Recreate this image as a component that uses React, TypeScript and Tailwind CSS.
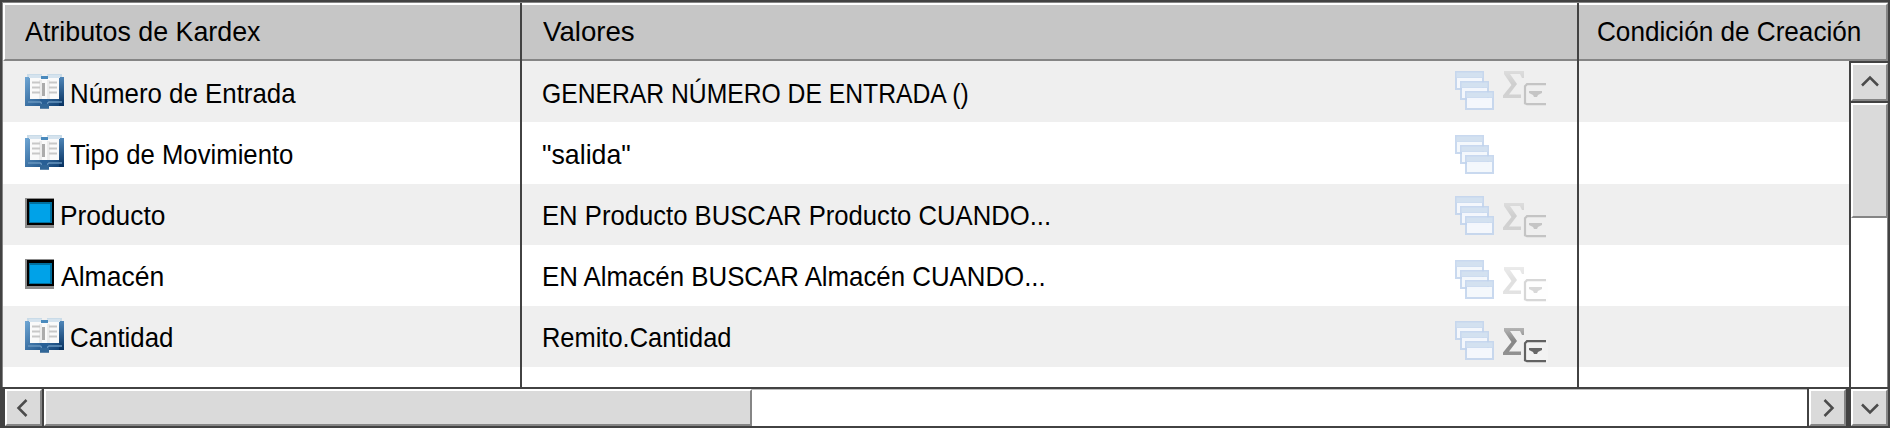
import type { ReactNode } from 'react';

function BookIcon() {
  return (
    <svg width="39" height="35" viewBox="0 0 39 35" className="block shrink-0">
      <defs>
        <linearGradient id="cover" x1="0" y1="0" x2="1" y2="1">
          <stop offset="0" stopColor="#6fa6d4" />
          <stop offset="0.55" stopColor="#34699c" />
          <stop offset="1" stopColor="#0a386b" />
        </linearGradient>
        <linearGradient id="edge" x1="0" y1="0" x2="0" y2="1">
          <stop offset="0" stopColor="#4f86b8" />
          <stop offset="1" stopColor="#06305f" />
        </linearGradient>
      </defs>
      <path d="M2 0h15v3h5v-3h15v4H2z" fill="#c9dbe8" />
      <path d="M0 3h39v29H24v2.500H15V32H0z" fill="url(#cover)" />
      <path d="M34 3h5v29h-5z" fill="url(#edge)" />
      <path d="M4 1h13v3h5V1h13v3H4z" fill="#d5e3ee" />
      <path d="M5 4h29v21H5z" fill="#fafafa" />
      <path d="M16 2h7v3h-7z" fill="#4a8abd" />
      <path d="M14 6h3v19h-3zM22 6h3v19h-3z" fill="#ececec" />
      <path d="M17 9h3v13h-3z" fill="#ababab" />
      <path d="M7 8.500h8M7 13.500h8M7 18.500h8M24 8.500h8M24 13.500h8M24 18.500h8" stroke="#c8c8c8" strokeWidth="2" />
      <path d="M3 28h12l2 1.500h5l2-1.500h13" fill="none" stroke="#6795bf" strokeWidth="1.500" />
      <path d="M15 25h9v2h-2v3h-5v-3h-2z" fill="#285f95" />
      <path d="M15 30h9v4.500h-9z" fill="#316697" />
    </svg>
  );
}

function SquareIcon() {
  return (
    <svg width="29" height="30" viewBox="0 0 29 30" className="block shrink-0">
      <path d="M0 0h29v30H0z" fill="#8b8b8b" />
      <path d="M2 1h27v26H2z" fill="#000" />
      <path d="M4 4h23v21H4z" fill="#00709f" />
      <path d="M5 6h20v18H5z" fill="#00a2e8" />
    </svg>
  );
}

function WindowsIcon() {
  return (
    <svg width="39" height="39" viewBox="0 0 39 39" className="block shrink-0">
      {[0, 1, 2].map((i) => (
        <g key={i} transform={`translate(${i * 5} ${i * 10})`}>
          <path d="M0 0h29v19H0z" fill="#bfd2ec" fillOpacity="0.85" />
          <path d="M1.500 1.500h26v5h-26z" fill="#d3e1f0" />
          <path d="M2 7h25v10H2z" fill="#fff" fillOpacity="0.8" />
        </g>
      ))}
    </svg>
  );
}

function SumMenuIcon() {
  return (
    <svg width="45" height="35" viewBox="0 0 45 35" className="block shrink-0">
      <defs>
        <linearGradient id="sum" x1="0" y1="0" x2="0" y2="1">
          <stop offset="0" stopColor="#b4b4b4" />
          <stop offset="0.5" stopColor="#858585" />
          <stop offset="1" stopColor="#929292" />
        </linearGradient>
      </defs>
      <path d="M1 0h20v7h-2l-2-4H7l7 10-8 10.500h12V27H0v-2.500L8.500 14 1 3z" fill="url(#sum)" />
      <path d="M20 12h25v23H20z" fill="#f8f8f8" fillOpacity="0.4" />
      <path d="M43 13.200H24l-2 2v17l2 1H43" fill="none" stroke="#626262" strokeWidth="2.200" />
      <path d="M26 20h13v2l-4 2-1 2h-3l-1-2-4-2z" fill="#686868" />
    </svg>
  );
}

type IconKind = 'book' | 'square';

interface Row {
  icon: IconKind;
  iconPad: string;
  name: string;
  namePad: string;
  nameScale: string;
  value: string;
  valuePad: string;
  valueScale: string;
  height: string;
  tone: string;
  windowsPad: string;
  sum?: string;
}

const rows: Row[] = [
  { icon: 'book', iconPad: 'pt-[13px]', name: 'Número de Entrada', namePad: 'pt-1 pl-1.5', nameScale: 'scale-x-[0.94]', value: 'GENERAR NÚMERO DE ENTRADA ()', valuePad: 'pt-[17px]', valueScale: 'scale-x-[0.898]', height: 'h-[61px]', tone: 'bg-[#efefef]', windowsPad: 'pt-[10px]', sum: 'pt-[10px] opacity-30' },
  { icon: 'book', iconPad: 'pt-[13px]', name: 'Tipo de Movimiento', namePad: 'pt-1 pl-1.5', nameScale: 'scale-x-[0.935]', value: '"salida"', valuePad: 'pt-[17px]', valueScale: 'scale-x-[0.972]', height: 'h-[62px]', tone: 'bg-white', windowsPad: 'pt-[13px]' },
  { icon: 'square', iconPad: 'pt-[14px]', name: 'Producto', namePad: 'pt-0.5 pl-1.5', nameScale: 'scale-x-[0.957]', value: 'EN Producto BUSCAR Producto CUANDO...', valuePad: 'pt-4', valueScale: 'scale-x-[0.933]', height: 'h-[61px]', tone: 'bg-[#efefef]', windowsPad: 'pt-[12px]', sum: 'pt-[19px] opacity-30' },
  { icon: 'square', iconPad: 'pt-[14px]', name: 'Almacén', namePad: 'pt-0.5 pl-[7px]', nameScale: 'scale-x-[0.965]', value: 'EN Almacén BUSCAR Almacén CUANDO...', valuePad: 'pt-4', valueScale: 'scale-x-[0.939]', height: 'h-[61px]', tone: 'bg-white', windowsPad: 'pt-[15px]', sum: 'pt-[22px] opacity-25' },
  { icon: 'book', iconPad: 'pt-[12px]', name: 'Cantidad', namePad: 'pt-1 pl-1.5', nameScale: 'scale-x-[0.94]', value: 'Remito.Cantidad', valuePad: 'pt-4', valueScale: 'scale-x-[0.925]', height: 'h-[61px]', tone: 'bg-[#efefef]', windowsPad: 'pt-[15px]', sum: 'pt-[22px]' },
];

function Label({ children, scale }: { children: ReactNode; scale: string }) {
  return <span className={`inline-block origin-left ${scale}`}>{children}</span>;
}

function ArrowButton({ d, className }: { d: string; className: string }) {
  return (
    <button className={`flex shrink-0 items-center justify-center border-2 border-t-white border-l-white border-r-[#858585] border-b-[#858585] bg-[#dadada] ${className}`}>
      <svg width="20" height="20" viewBox="0 0 20 20" fill="none" stroke="#4b4b4b" strokeWidth="2.500">
        <path d={d} />
      </svg>
    </button>
  );
}

const headCell = 'h-full shrink-0 border-t-2 border-t-white border-b-2 border-b-[#858585] bg-[#c6c6c6] pt-[11px]';

export default function App() {
  return (
    <div className="flex h-[428px] w-[1890px] flex-col overflow-hidden border-2 border-[#424242] bg-white font-['Liberation_Sans',Arial,sans-serif] text-[27.500px] leading-8 whitespace-nowrap text-black">
      <div className="flex h-[59px] shrink-0 border-t border-l border-[#858585]">
        <div className={`${headCell} w-[517px] border-l-2 border-l-white pl-5`}>
          <Label scale="scale-x-[0.975]">Atributos de Kardex</Label>
        </div>
        <div className="w-0.5 shrink-0 bg-[#424242]" />
        <div className={`${headCell} w-[1055px] pl-[21px]`}>
          <Label scale="scale-x-[1.005]">Valores</Label>
        </div>
        <div className="w-0.5 shrink-0 bg-[#424242]" />
        <div className={`${headCell} w-[309px] border-r-2 border-r-[#858585] pl-[18px]`}>
          <Label scale="scale-x-[0.95]">Condición de Creación</Label>
        </div>
      </div>
      <div className="flex h-[326px] shrink-0 border-l border-[#858585]">
        <div className="flex w-[1846px] shrink-0 flex-col">
          {rows.map((row) => (
            <div key={row.name} className={`flex shrink-0 ${row.height} ${row.tone}`}>
              <div className={`flex w-[517px] shrink-0 items-start pl-[22px] ${row.iconPad}`}>
                {row.icon === 'book' ? <BookIcon /> : <SquareIcon />}
                <div className={row.namePad}>
                  <Label scale={row.nameScale}>{row.name}</Label>
                </div>
              </div>
              <div className="w-0.5 shrink-0 bg-[#424242]" />
              <div className="flex w-[1055px] shrink-0">
                <div className={`w-[933px] shrink-0 pl-5 ${row.valuePad}`}>
                  <Label scale={row.valueScale}>{row.value}</Label>
                </div>
                <div className={`w-12 shrink-0 ${row.windowsPad}`}>
                  <WindowsIcon />
                </div>
                {row.sum && (
                  <div className={row.sum}>
                    <SumMenuIcon />
                  </div>
                )}
              </div>
              <div className="w-0.5 shrink-0 bg-[#424242]" />
            </div>
          ))}
          <div className="flex flex-1">
            <div className="w-[517px]" />
            <div className="w-0.5 bg-[#424242]" />
            <div className="w-[1055px]" />
            <div className="w-0.5 bg-[#424242]" />
          </div>
        </div>
        <div className="flex w-[39px] shrink-0 flex-col border-t-2 border-l-2 border-[#424242]">
          <ArrowButton className="h-[38px]" d="M2 13.500l8-8 8 8" />
          <div className="h-0.5 shrink-0 bg-[#424242]" />
          <div className="h-[115px] shrink-0 border-2 border-t-white border-l-white border-r-[#858585] border-b-[#858585] bg-[#dadada]" />
          <div className="flex-1 border-r border-[#858585]" />
        </div>
      </div>
      <div className="flex h-[39px] shrink-0 border-t-2 border-l-[3px] border-[#424242]">
        <ArrowButton className="w-[37px]" d="M12.500 2l-8 8 8 8" />
        <div className="w-0.5 shrink-0 bg-[#424242]" />
        <div className="w-[708px] shrink-0 border-2 border-t-white border-l-white border-r-[#858585] border-b-[#858585] bg-[#dadada]" />
        <div className="flex-1 border-t border-[#bdbdbd]" />
        <div className="w-0.5 shrink-0 bg-[#424242]" />
        <ArrowButton className="w-[37px]" d="M6.500 2l8 8-8 8" />
        <div className="w-[5px] shrink-0 bg-[#424242]" />
        <ArrowButton className="w-[37px]" d="M2 6.500l8 8 8-8" />
      </div>
    </div>
  );
}
